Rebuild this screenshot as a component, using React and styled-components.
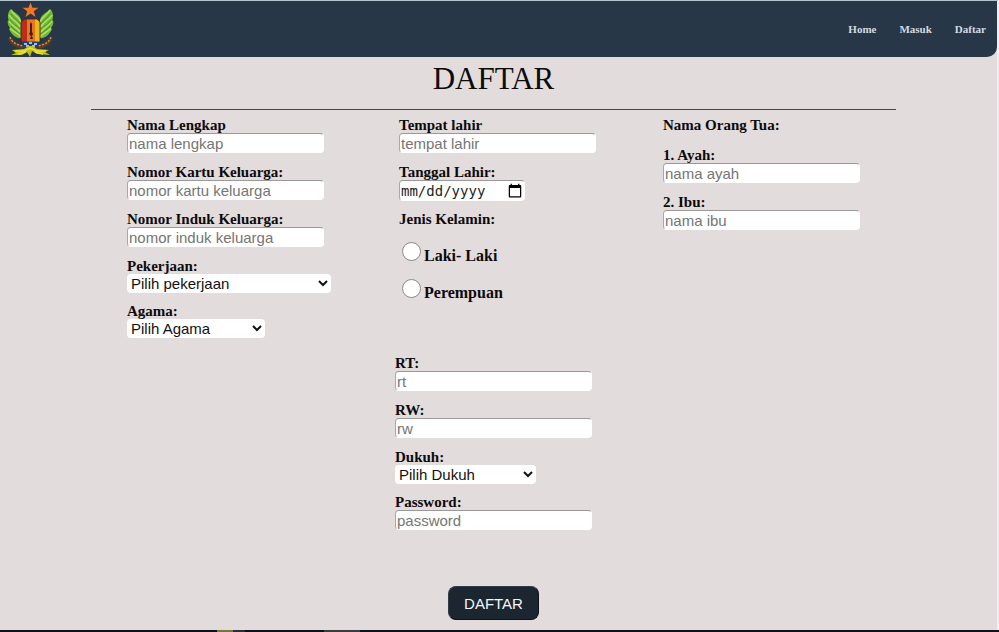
import React from "react";
import styled, { createGlobalStyle } from "styled-components";

const GlobalStyle = createGlobalStyle`
  *, *::before, *::after { box-sizing: border-box; }
  body {
    margin: 0;
    background: #e2dcdc;
    color: #0c0a0a;
    font-family: "Liberation Serif", "Times New Roman", serif;
  }
`;

const Page = styled.div`
  display: flex;
  flex-direction: column;
  min-height: 100vh;
  border-top: 1px solid #b4c4cf;
  border-right: 2px solid #f0eff1;
`;

const Header = styled.header`
  display: flex;
  align-items: center;
  justify-content: space-between;
  height: 56px;
  padding: 0 11px 0 7px;
  background: #283747;
  border-bottom-right-radius: 10px;
`;

const LogoLink = styled.a`
  display: block;
  height: 56px;
`;

const Nav = styled.nav`
  display: flex;
  gap: 23px;
`;

const NavLink = styled.a`
  color: #d3dae0;
  font-size: 11px;
  font-weight: bold;
  line-height: 16px;
  text-decoration: none;
`;

const Form = styled.form`
  flex: 1;
  display: flex;
  flex-direction: column;
  align-items: center;
  padding: 0 101px 10px 91px;
`;

const Title = styled.h1`
  width: 100%;
  margin: 0 0 7px;
  padding: 4px 0 12px;
  border-bottom: 1px solid #2a4d6a;
  font-size: 31px;
  font-weight: normal;
  line-height: 36px;
  text-align: center;
`;

const Columns = styled.div`
  display: grid;
  grid-template-columns: 272fr 264fr 233fr;
  width: 100%;
  padding-left: 36px;
`;

const Stack = styled.div`
  display: flex;
  flex-direction: column;
  align-items: flex-start;
  gap: 10px;
`;

const LowerStack = styled(Stack)`
  margin-top: 17px;
`;

const FieldBox = styled.div`
  display: flex;
  flex-direction: column;
  align-items: flex-start;
`;

const Label = styled.label`
  font-size: 15px;
  font-weight: bold;
  line-height: 16px;
`;

const GroupTitle = styled.h2`
  margin: 0 0 4px;
  font-size: 15px;
  font-weight: bold;
  line-height: 16px;
`;

const Input = styled.input`
  width: 197px;
  height: 20px;
  margin: 0 0 1px;
  padding: 0 1px;
  border: 1px solid;
  border-color: #9a9898 #fff #fff #a9a7a7;
  border-radius: 4px;
  background: #fff;
  color: #222;
  font-family: "Liberation Sans", Arial, sans-serif;
  font-size: 15px;

  &::placeholder { color: #757575; }
`;

const DateInput = styled(Input)`
  width: 126px;
  height: 21px;
  margin: 0;
  font-family: "DejaVu Sans Mono", monospace;
  font-size: 14px;

  &::-webkit-datetime-edit-fields-wrapper { padding: 0; }
  &::-webkit-datetime-edit-month-field,
  &::-webkit-datetime-edit-day-field,
  &::-webkit-datetime-edit-year-field { padding: 0; }
  &::-webkit-calendar-picker-indicator {
    width: 16px;
    height: 16px;
    padding: 0;
  }
`;

const Select = styled.select`
  width: ${(p) => p.$width}px;
  height: 19px;
  padding: 0 2px 0 0;
  border: 0;
  border-radius: 4px;
  background: #fff;
  color: #111;
  font-family: "Liberation Sans", Arial, sans-serif;
  font-size: 15px;
`;

const RadioGroup = styled.fieldset`
  margin: 0;
  padding: 0;
  border: 0;
`;

const Legend = styled.legend`
  margin-bottom: 13px;
  padding: 0;
  font-size: 15px;
  font-weight: bold;
  line-height: 16px;
`;

const RadioRow = styled.label`
  display: flex;
  align-items: flex-start;
  gap: 3px;
  height: 37px;
  padding-left: 3px;
  font-size: 16px;
  font-weight: bold;
`;

const Radio = styled.input`
  appearance: none;
  width: 19px;
  height: 19px;
  margin: 2px 0 0;
  border: 1px solid #8b8989;
  border-radius: 50%;
  background: #fff;

  &:checked { border: 5px solid #283747; }
`;

const RadioText = styled.span`
  padding-top: 6px;
  line-height: 20px;
`;

const Submit = styled.button`
  height: 34px;
  margin-top: 55px;
  padding: 0 15px;
  border: 1px solid;
  border-color: #303c46 #0b1117 #0b1117 #303c46;
  border-radius: 8px;
  background: #1b2631;
  color: #f4f6f8;
  font-family: "Liberation Sans", Arial, sans-serif;
  font-size: 15px;
`;

const BottomEdge = styled.footer`
  height: 2px;
  margin-right: -2px;
  background: linear-gradient(
    to right,
    #0e1117 217px, #77753b 217px, #77753b 233px, #2b2d31 233px, #2b2d31 245px,
    #0e1117 245px, #0e1117 324px, #3c3b3e 324px, #3c3b3e 360px, #0e1117 360px
  );
`;

function Wing() {
  return (
    <>
      <path d="M4 8C6 11 13 13 14 19V37C9 38 4 33 2 28L4 28C1 25 0 22 1 19L2 20C0 16 1 10 4 8Z" fill="#6fb83a" />
      <path d="M4 9C6 14 12 15 14 21M2 14C5 20 11 20 13 26M2 20C5 25 10 26 13 31M3 27C6 31 11 32 14 36" fill="none" stroke="#b5da5c" strokeWidth="1.6" />
      <path d="M4 13C6 17 10 18 13 23M3 19C6 24 9 24 13 28M4 25C7 29 10 30 13 33" fill="none" stroke="#3d8a2a" strokeWidth="0.8" />
    </>
  );
}

function Logo() {
  return (
    <svg width="48" height="56" viewBox="0 0 48 56" role="img" aria-label="Logo">
      <Wing />
      <g transform="matrix(-1 0 0 1 47 0)"><Wing /></g>
      <path d="M3 37C5 43 10 45 17 46M44 37C42 43 37 45 30 46" fill="none" stroke="#5b3c25" strokeWidth="4" />
      <path d="M3 36C5 42 10 44 17 45M44 36C42 42 37 44 30 45" fill="none" stroke="#d49a51" strokeWidth="1.3" strokeDasharray="2 1.5" />
      <path d="M14 21L18 18H30L33 21V41H14Z" fill="#e5781c" />
      <path d="M14 21L18 18H20V41H14Z" fill="#bd2d1d" />
      <path d="M28 18H30L33 21V41H28Z" fill="#edb522" />
      <path d="M14 21L18 18H30L33 21V41H14Z" fill="none" stroke="#4b1d17" strokeWidth="0.8" />
      <path d="M24 21L25 23V31L26 33L25 35L26 38H23L24 35L22 33L23 31V23Z" fill="#491d10" />
      <path d="M14 41H33L30 47H17Z" fill="#203e70" />
      <path d="M17 43H20M22 42H25M27 43H30M19 45H22M25 45H28" stroke="#d5e4f3" strokeWidth="1.3" />
      <path d="M23.500 1.500L25.500 6.700H31.500L26.800 10.300L28.500 16L23.500 12.500L18.500 16L20.200 10.300L15.500 6.700H21.500Z" fill="#ef7725" />
      <path d="M5 49L17 48L22 45H26L30 48L42 49L38 51L43 54L30 53L25 50L23 56L20 51L15 54L4 54L9 52Z" fill="#b9c51b" />
      <path d="M8 50L17 50L23 47L30 50L39 50M11 53L19 51M36 53L28 51" fill="none" stroke="#efdf35" strokeWidth="1.4" />
    </svg>
  );
}

function TextField({ id, label, placeholder, type = "text" }) {
  return (
    <FieldBox>
      <Label htmlFor={id}>{label}</Label>
      <Input id={id} name={id} type={type} placeholder={placeholder} />
    </FieldBox>
  );
}

function SelectField({ id, label, option, width }) {
  return (
    <FieldBox>
      <Label htmlFor={id}>{label}</Label>
      <Select id={id} name={id} $width={width} defaultValue="">
        <option value="">{option}</option>
      </Select>
    </FieldBox>
  );
}

export default function App() {
  return (
    <>
      <GlobalStyle />
      <Page>
        <Header>
          <LogoLink href="#home"><Logo /></LogoLink>
          <Nav>
            <NavLink href="#home">Home</NavLink>
            <NavLink href="#masuk">Masuk</NavLink>
            <NavLink href="#daftar">Daftar</NavLink>
          </Nav>
        </Header>
        <Form>
          <Title>DAFTAR</Title>
          <Columns>
            <Stack>
              <TextField id="nama" label="Nama Lengkap" placeholder="nama lengkap" />
              <TextField id="kk" label="Nomor Kartu Keluarga:" placeholder="nomor kartu keluarga" />
              <TextField id="nik" label="Nomor Induk Keluarga:" placeholder="nomor induk keluarga" />
              <SelectField id="pekerjaan" label="Pekerjaan:" option="Pilih pekerjaan" width={204} />
              <SelectField id="agama" label="Agama:" option="Pilih Agama" width={138} />
            </Stack>
            <Stack>
              <TextField id="tempat" label="Tempat lahir" placeholder="tempat lahir" />
              <FieldBox>
                <Label htmlFor="tanggal">Tanggal Lahir:</Label>
                <DateInput id="tanggal" name="tanggal" type="date" />
              </FieldBox>
              <RadioGroup>
                <Legend>Jenis Kelamin:</Legend>
                <RadioRow>
                  <Radio type="radio" name="kelamin" value="laki-laki" />
                  <RadioText>Laki- Laki</RadioText>
                </RadioRow>
                <RadioRow>
                  <Radio type="radio" name="kelamin" value="perempuan" />
                  <RadioText>Perempuan</RadioText>
                </RadioRow>
              </RadioGroup>
            </Stack>
            <Stack>
              <GroupTitle>Nama Orang Tua:</GroupTitle>
              <TextField id="ayah" label="1. Ayah:" placeholder="nama ayah" />
              <TextField id="ibu" label="2. Ibu:" placeholder="nama ibu" />
            </Stack>
          </Columns>
          <LowerStack>
            <TextField id="rt" label="RT:" placeholder="rt" />
            <TextField id="rw" label="RW:" placeholder="rw" />
            <SelectField id="dukuh" label="Dukuh:" option="Pilih Dukuh" width={141} />
            <TextField id="password" label="Password:" type="password" placeholder="password" />
          </LowerStack>
          <Submit type="submit">DAFTAR</Submit>
        </Form>
        <BottomEdge />
      </Page>
    </>
  );
}
